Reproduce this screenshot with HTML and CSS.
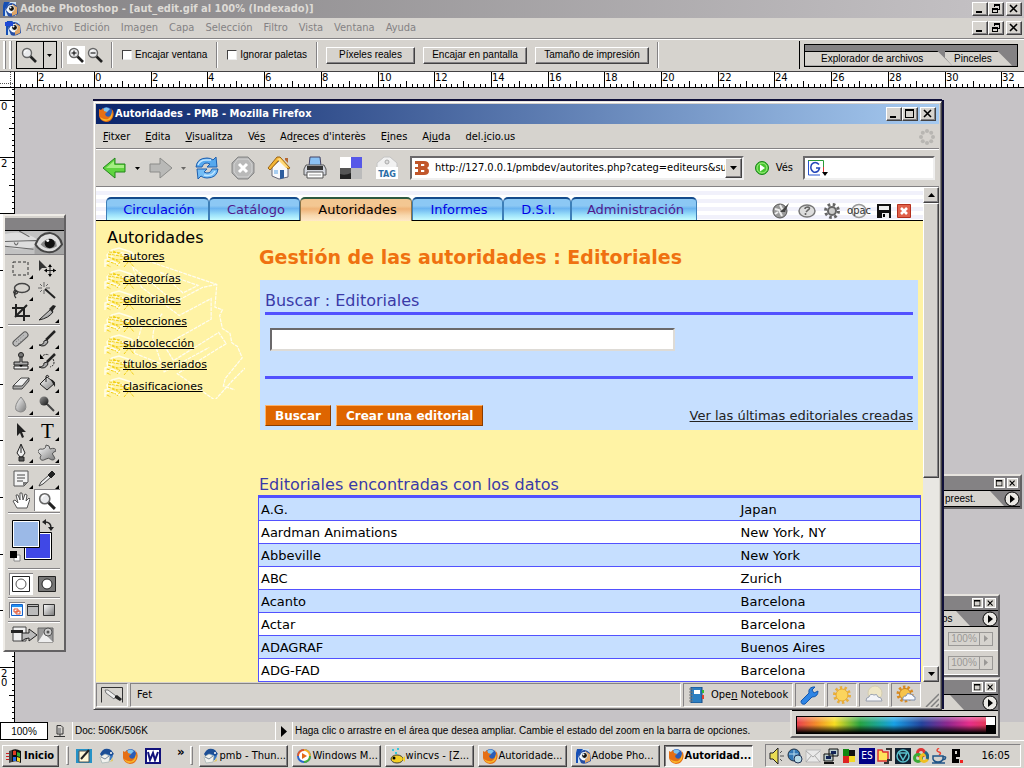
FILE: index.html
```html
<!DOCTYPE html>
<html lang="es">
<head>
<meta charset="utf-8">
<title>Adobe Photoshop - [aut_edit.gif al 100% (Indexado)]</title>
<link rel="stylesheet" href="styles.css">
</head>
<body>
<svg class="defs" aria-hidden="true">
  <defs>
    <linearGradient id="silver" x1="0" y1="0" x2="1" y2="1"><stop offset="0" stop-color="#fff"/><stop offset="1" stop-color="#777"/></linearGradient>
    <linearGradient id="dark" x1="0" y1="0" x2="1" y2="1"><stop offset="0" stop-color="#999"/><stop offset="1" stop-color="#111"/></linearGradient>
    <symbol id="firefox" viewBox="0 0 16 16"><circle cx="8.500" cy="7" r="6" fill="#2a5db8"/><path d="M5 3q3-3 7 0l-3 3-3 1z" fill="#7fc4ef"/><path d="M1 3l2 1 2-2 1 3 3 1-2 2 1 2q3 2 5-1 2-3 0-7 4 4 2 9-2 5-7 5-6-1-7-6z" fill="#e66f14"/><path d="M14 5q2 9-6 10-4 0-6-4 4 3 8 2 4-3 4-8z" fill="#f8b62b"/></symbol>
    <symbol id="photoshop" viewBox="0 0 16 16"><path d="M2 1h12v14H2z" fill="#cfe4f4"/><path d="M2 1h6L3 8v7H1V5z" fill="#164fb5"/><path d="M3 8q5-10 12-3l1 8q-6 4-10 2z" fill="#274ea3"/><path d="M4 9q4-7 10-2-2 7-7 5z" fill="#fff"/><path d="M10 3l5 3v7l-5 2z" fill="#dfa565"/><circle cx="9" cy="7.500" r="3.500" fill="#e8f3fb"/><circle cx="9.500" cy="7.500" r="2.400" fill="#111"/><circle cx="8.500" cy="6.500" r="1" fill="#fff"/></symbol>
    <symbol id="bird" viewBox="0 0 16 16"><circle cx="8" cy="7" r="6" fill="#3577c4"/><path d="M1 6q4-8 11-4l3 4-3 2Q6 3 3 9z" fill="#1c4e95"/><path d="M1 9l5-3 5 2-1 6-7 1z" fill="#f2f2ee" stroke="#9aa" stroke-width=".6"/><path d="M2 9l4 2 4-3" fill="none" stroke="#789"/><circle cx="12" cy="5" r="1" fill="#fff"/><path d="M13 9q0 4-3 5l4-1z" fill="#e3c85a"/></symbol>
    <symbol id="magnifier" viewBox="0 0 16 16"><path d="M9 9l6 6" stroke="#222" stroke-width="2.600"/><circle cx="6" cy="6" r="4.500" fill="#e9eaec" stroke="#666" stroke-width="1.400"/><path d="M3.500 6q0-3 3-3" fill="none" stroke="#fff"/></symbol>
    <symbol id="minimize" viewBox="0 0 10 10"><path d="M1 7h6v2H1z"/></symbol>
    <symbol id="restore" viewBox="0 0 10 10"><path d="M3 0h6v6H7V5h1V2H4v1H3zM1 4h6v5H1zm1 2v2h4V6z" fill-rule="evenodd"/></symbol>
    <symbol id="maximize" viewBox="0 0 10 10"><path d="M0 0h9v9H0zm1 2v6h7V2z" fill-rule="evenodd"/></symbol>
    <symbol id="cross" viewBox="0 0 10 10"><path d="M1 1l7 7M8 1L1 8" stroke="#000" stroke-width="1.600"/></symbol>
    <symbol id="play" viewBox="0 0 16 16"><circle cx="8" cy="8" r="7" fill="#ebe9e5" stroke="#000"/><path d="M6 4v8l5-4z"/></symbol>
    <symbol id="book" viewBox="0 0 32 21"><g fill="none"><path d="M1 20V13l3-1-1-4 5-5 7-2 12 4 3 3M4 12l9-6 12 4M1 17l7-3 8 4" stroke="#fffde8" stroke-width="1.500"/><path d="M4 7l12 2 11 2M4 10l10 3 13-2M3 14l9 3M5 5l12 1M3 18l4 2M9 4l9 4M21 14q5-3 6-1M20 20l5-6 5 6M8 12l8 3-3 4" stroke="#f2cf16" stroke-dasharray="3 1"/></g></symbol>
  </defs>
</svg>

<header class="ps-title">
  <svg class="i16"><use href="#photoshop"/></svg>
  <h1>Adobe Photoshop - [aut_edit.gif al 100% (Indexado)]</h1>
  <div class="win-buttons"><button aria-label="Minimizar"><svg><use href="#minimize"/></svg></button><button aria-label="Restaurar"><svg><use href="#restore"/></svg></button><button class="close" aria-label="Cerrar"><svg><use href="#cross"/></svg></button></div>
</header>

<nav class="ps-menu">
  <svg class="i16"><use href="#photoshop"/><path d="M0 2h8v4H0z" fill="#1e49d8"/></svg>
  <button>Archivo</button><button>Edición</button><button>Imagen</button><button>Capa</button><button>Selección</button><button>Filtro</button><button>Vista</button><button>Ventana</button><button>Ayuda</button>
  <div class="win-buttons"><button aria-label="Minimizar documento"><svg><use href="#minimize"/></svg></button><button aria-label="Restaurar documento"><svg><use href="#restore"/></svg></button><button class="close" aria-label="Cerrar documento"><svg><use href="#cross"/></svg></button></div>
</nav>

<div class="ps-options">
  <span class="grip"></span>
  <button class="tool-pick" aria-label="Herramienta zoom"><svg class="i16"><use href="#magnifier"/></svg><svg class="arrow" viewBox="0 0 5 3"><path d="M0 0h5L2.500 3z"/></svg></button>
  <span class="rule"></span>
  <div class="zooms"><button class="on" aria-label="Aumentar"><svg class="i16"><use href="#magnifier"/><path d="M3.500 6h5M6 3.500v5" stroke="#000"/></svg></button><button aria-label="Reducir"><svg class="i16"><use href="#magnifier"/><path d="M3.500 6h5" stroke="#000"/></svg></button></div>
  <span class="rule"></span>
  <label class="opt"><input type="checkbox">Encajar ventana</label>
  <span class="rule"></span>
  <label class="opt"><input type="checkbox">Ignorar paletas</label>
  <span class="rule"></span>
  <button class="push p1">Píxeles reales</button><button class="push p2">Encajar en pantalla</button><button class="push p3">Tamaño de impresión</button>
  <span class="rule"></span>
  <span class="well-edge"></span>
  <div class="well"><button class="w1">Explorador de archivos</button><button class="w2">Pinceles</button></div>
</div>

<div class="ruler-row"><div class="ruler-corner"></div><svg class="ruler-h" id="ruler-h" aria-hidden="true"></svg></div>

<main class="workspace">
  <svg class="ruler-v" id="ruler-v" aria-hidden="true"></svg>
  <div class="canvas">

  <section class="palette pal-preset">
    <div class="pal-title"><button aria-label="Contraer"><svg><use href="#maximize"/></svg></button><button aria-label="Cerrar"><svg><use href="#cross"/></svg></button></div>
    <div class="pal-tabs"><span class="pal-tab">preest.</span><button class="pal-go" aria-label="Menú de paleta"><svg><use href="#play"/></svg></button></div>
  </section>
  <section class="palette pal-layers">
    <div class="pal-title"><button aria-label="Contraer"><svg><use href="#maximize"/></svg></button><button aria-label="Cerrar"><svg><use href="#cross"/></svg></button></div>
    <div class="pal-tabs"><span class="pal-tab">os</span><button class="pal-go" aria-label="Menú de paleta"><svg><use href="#play"/></svg></button></div>
    <div class="pal-field"><button disabled><span>100%</span><i><svg viewBox="0 0 4 7"><path d="M0 0v7l4-3.500z"/></svg></i></button></div>
    <div class="pal-field"><button disabled><span>100%</span><i><svg viewBox="0 0 4 7"><path d="M0 0v7l4-3.500z"/></svg></i></button></div>
  </section>
  <section class="palette pal-color">
    <div class="pal-title"><button aria-label="Contraer"><svg><use href="#maximize"/></svg></button><button aria-label="Cerrar"><svg><use href="#cross"/></svg></button></div>
    <div class="pal-tabs"><span class="pal-tab"></span><button class="pal-go" aria-label="Menú de paleta"><svg><use href="#play"/></svg></button></div>
    <div class="ramp"><span></span></div>
  </section>

  <section class="firefox">
    <header class="ff-title"><svg class="i16"><use href="#firefox"/></svg><h2>Autoridades - PMB - Mozilla Firefox</h2>
      <div class="win-buttons"><button aria-label="Minimizar"><svg><use href="#minimize"/></svg></button><button aria-label="Maximizar"><svg><use href="#maximize"/></svg></button><button class="close" aria-label="Cerrar"><svg><use href="#cross"/></svg></button></div>
    </header>
    <nav class="ff-menu"><button><u>F</u>itxer</button><button><u>E</u>dita</button><button><u>V</u>isualitza</button><button>Vé<u>s</u></button><button>Ad<u>r</u>eces d'interès</button><button>E<u>i</u>nes</button><button>Aj<u>u</u>da</button><button>del.<u>i</u>cio.us</button>
      <svg class="throbber" viewBox="0 0 16 16"><g fill="#b8b6b2"><circle cx="8" cy="2" r="2"/><circle cx="12.200" cy="3.800" r="2"/><circle cx="14" cy="8" r="2"/><circle cx="12.200" cy="12.200" r="2"/><circle cx="8" cy="14" r="2"/><circle cx="3.800" cy="12.200" r="2"/><circle cx="2" cy="8" r="2"/><circle cx="3.800" cy="3.800" r="2"/></g></svg>
    </nav>
    <div class="ff-tools">
      <button aria-label="Enrere"><svg width="24" height="24" viewBox="0 0 24 24"><path d="M1 12L13 2v6h10v8H13v6z" fill="#5fd43f" stroke="#23871b"/><path d="M4 12l8-7v4h10v3z" fill="#a5ee83"/></svg></button>
      <svg class="arrow" viewBox="0 0 5 3"><path d="M0 0h5L2.500 3z"/></svg>
      <button aria-label="Endavant"><svg width="24" height="24" viewBox="0 0 24 24"><path d="M23 12L11 2v6H1v8h10v6z" fill="#b9b9b7" stroke="#8b8b89"/></svg></button>
      <svg class="arrow dim" viewBox="0 0 5 3"><path d="M0 0h5L2.500 3z"/></svg>
      <button aria-label="Actualitza"><svg width="24" height="24" viewBox="0 0 24 24"><path d="M1 11Q2 2 12 2q4 0 6 2l3-3 1 10H12l3-3Q9 5 7 11z" fill="#55a8ee" stroke="#1f5fae"/><path d="M23 13q-1 9-11 9-4 0-6-2l-3 3-1-10h10l-3 3q6 3 8-3z" fill="#74bdf6" stroke="#1f5fae"/><path d="M3 9q2-5 8-5h5M9 19q8 2 11-4" fill="none" stroke="#c4e6ff" stroke-width="1.500"/></svg></button>
      <button class="b-gap" aria-label="Atura"><svg width="24" height="24" viewBox="0 0 24 24"><path d="M7 1h10l6 6v10l-6 6H7l-6-6V7z" fill="#aaa" stroke="#888"/><path d="M7 3h10l4 5v8l-4 5H7l-4-5V8z" fill="#b9b9b9" stroke="#d5d5d5"/><path d="M8 8l8 8m0-8l-8 8" stroke="#fff" stroke-width="3"/></svg></button>
      <button class="b-gap" aria-label="Inici"><svg width="24" height="24" viewBox="0 0 24 24"><path d="M5 11l8-7 8 7v10l-9 2-7-3z" fill="#f8f8fb" stroke="#667"/><path d="M1 12L10 1h3l10 11-2 1-9-9-9 10z" fill="#f4b535" stroke="#9b6415"/><path d="M10 3l3-1 8 9-2 1z" fill="#ffd97a"/><path d="M13 14h4v8l-4 1z" fill="#2e5d9e"/><path d="M7 14h4v4H7z" fill="#a8cdf0"/><path d="M18 2h3v5l-3-3z" fill="#b56835"/></svg></button>
      <button class="b-gap" aria-label="Imprimeix"><svg width="24" height="24" viewBox="0 0 24 24"><path d="M7 1h10l1 9H6z" fill="#8cc3f5" stroke="#446"/><path d="M3 9h18l2 4v6H1v-6z" fill="#d3d6dd" stroke="#555"/><path d="M4 10h16v4H4z" fill="#333"/><path d="M4 16h16v6H4z" fill="#fff" stroke="#555"/><path d="M6 19h12" stroke="#999"/></svg></button>
      <button class="b-gap" aria-label="del.icio.us"><svg width="24" height="24" viewBox="0 0 24 24"><path d="M1 1h11v11H1z" fill="#fff"/><path d="M12 1h11v11H12z" fill="#5658e8"/><path d="M1 12h11v11H1z" fill="#222"/><path d="M12 12h11v11H12z" fill="#bbb"/><path d="M1 12h11v5q-6 3-11 1z" fill="#555"/></svg></button>
      <button class="b-gap" aria-label="TAG"><svg width="24" height="24" viewBox="0 0 24 24"><path d="M2 12V7l7-6h6l7 6v5z" fill="#f1f1f1" stroke="#c4c4c4"/><circle cx="12" cy="6" r="2" fill="#ddd" stroke="#aaa"/><path d="M1 11h22v12H1z" fill="#fff"/><text x="12" y="21" text-anchor="middle" class="tag-text">TAG</text></svg></button>
      <div class="url"><svg class="i16" viewBox="0 0 16 16"><path d="M1 1h9q5 0 5 4 0 2-2 3 2 1 2 3 0 4-5 4H1v-3h3V9H1V7h3V4H1zm6 3v2h3q1-1 0-2zm0 6v2h3q1-1 0-2z" fill="#c1572b" fill-rule="evenodd"/></svg><input type="text" aria-label="Adreça" value="http://127.0.0.1/pmbdev/autorites.php?categ=editeurs&amp;sub=&amp;id="><button class="drop" aria-label="Historial"><svg class="arrow big" viewBox="0 0 7 4"><path d="M0 0h7L3.500 4z"/></svg></button></div>
      <button class="go"><svg class="i16" viewBox="0 0 16 16"><circle cx="8" cy="8" r="6.500" fill="#46c52f" stroke="#168319"/><circle cx="8" cy="8" r="5" fill="none" stroke="#a5ef86"/><path d="M6 4.500v7L11 8z" fill="#fff"/></svg>Vés</button>
      <div class="search"><svg width="22" height="18" viewBox="0 0 22 18"><path d="M1 1h15v15H1z" fill="#fff"/><path d="M1 1.500h15.500V8" fill="none" stroke="#2a9a37"/><path d="M1.500 2v14H13" fill="none" stroke="#2854cf"/><path d="M16.500 8v5" stroke="#d33"/><path d="M12 5.500q-4-4-7.500 0-2 5 2 7.500 5 1 6-4H9" fill="none" stroke="#2346b8" stroke-width="1.500"/><path d="M15 13h6l-3 4z"/></svg><input type="text" aria-label="Cerca"></div>
    </div>

    <div class="ff-view">
      <div class="page">
        <div class="tabs">
          <a href="#" class="t1">Circulación</a><a href="#" class="t2 seen">Catálogo</a><a href="#" class="t3 active">Autoridades</a><a href="#" class="t4">Informes</a><a href="#" class="t5">D.S.I.</a><a href="#" class="t6 seen">Administración</a>
          <div class="tab-icons">
            <svg width="20" height="18" viewBox="0 0 20 18"><circle cx="9" cy="9" r="7" fill="#999" stroke="#555"/><path d="M4 7l4 1 3 6M9 3l2 4 4 1M4 12l3-2" stroke="#eee" stroke-width="2" fill="none"/><path d="M9 10l9-9-4 9" fill="#444"/></svg>
            <svg width="20" height="18" viewBox="0 0 20 18"><ellipse cx="10" cy="9" rx="8" ry="6" fill="#ddd" stroke="#777" stroke-width="1.500"/><path d="M8 7q0-2 3-2 3 1 0 3l-2 2M8.500 11v2" fill="none" stroke="#666" stroke-width="1.600"/></svg>
            <svg width="18" height="18" viewBox="0 0 18 18"><circle cx="9" cy="9" r="6.500" fill="none" stroke="#666" stroke-width="3" stroke-dasharray="2.600 2.500"/><circle cx="9" cy="9" r="4" fill="#ccc" stroke="#666" stroke-width="2"/></svg>
            <svg class="opac" width="26" height="18" viewBox="0 0 26 18"><ellipse cx="12" cy="9" rx="7" ry="6.500" fill="#f5f5f5" stroke="#999" stroke-width="1.500"/><text x="12" y="12" text-anchor="middle">opac</text></svg>
            <svg class="disk" width="14" height="14" viewBox="0 0 14 14"><path d="M0 0h14v14H0z" fill="#111"/><path d="M2 2h10v4H2zM5 9h7v5H5z" fill="#eee"/><path d="M6 10h2v3H6z"/></svg>
            <svg class="exit" width="14" height="14" viewBox="0 0 14 14"><path d="M.5.500h13v13H.5z" fill="#e0604a" stroke="#b5301e"/><path d="M4 4l6 6m0-6l-6 6" stroke="#fff" stroke-width="2.600"/></svg>
          </div>
        </div>
        <div class="page-body">
          <aside class="side">
            <h3>Autoridades</h3>
            <div class="side-links">
              <svg class="watermark" viewBox="0 0 150 152"><g fill="none" stroke="#fffdf0" stroke-width="1.300" stroke-dasharray="4 1"><path d="M18 1l8 2 94 32-2 24 8 3-3 6 3 14 8 5 2 10 6 4 5 12-18 22-2 8 12 4M120 35l-15 3-30 16L30 16l10 22 40 30 34-18v22l-50 28 10 16 48-30 8 12-52 32 40 28 18-20 14-14M60 22l40 14-16 8zM62 66q-10 12-10 26l12 36 48-26M10 80h30l-8 28 30 12"/></g></svg>
              <ul>
                <li><svg><use href="#book"/></svg><a href="#">autores</a></li>
                <li><svg><use href="#book"/></svg><a href="#">categorías</a></li>
                <li><svg><use href="#book"/></svg><a href="#">editoriales</a></li>
                <li><svg><use href="#book"/></svg><a href="#">colecciones</a></li>
                <li><svg><use href="#book"/></svg><a href="#">subcolección</a></li>
                <li><svg><use href="#book"/></svg><a href="#">títulos seriados</a></li>
                <li><svg><use href="#book"/></svg><a href="#">clasificaciones</a></li>
              </ul>
            </div>
          </aside>
          <div class="content">
            <h2>Gestión de las autoridades : Editoriales</h2>
            <form class="search-form">
              <h3><label for="q">Buscar : Editoriales</label></h3>
              <div class="field"><input id="q" type="text"></div>
              <div class="actions"><button type="button">Buscar</button><button type="button">Crear una editorial</button><a href="#">Ver las últimas editoriales creadas</a></div>
            </form>
            <h3 class="found">Editoriales encontradas con los datos</h3>
            <table>
              <tbody>
                <tr><td>A.G.</td><td>Japan</td></tr>
                <tr><td>Aardman Animations</td><td>New York, NY</td></tr>
                <tr><td>Abbeville</td><td>New York</td></tr>
                <tr><td>ABC</td><td>Zurich</td></tr>
                <tr><td>Acanto</td><td>Barcelona</td></tr>
                <tr><td>Actar</td><td>Barcelona</td></tr>
                <tr><td>ADAGRAF</td><td>Buenos Aires</td></tr>
                <tr><td>ADG-FAD</td><td>Barcelona</td></tr>
              </tbody>
            </table>
          </div>
        </div>
      </div>
      <div class="scrollbar"><button aria-label="Amunt"><svg class="arrow big" viewBox="0 0 7 4"><path d="M0 4h7L3.500 0z"/></svg></button><div class="thumb"></div><div class="track"></div><button aria-label="Avall"><svg class="arrow big" viewBox="0 0 7 4"><path d="M0 0h7L3.500 4z"/></svg></button></div>
    </div>

    <footer class="ff-status">
      <div class="cell c-edit"><svg width="22" height="16" viewBox="0 0 22 16"><path d="M.5 15.500V.5h21v15" fill="none" stroke="#333"/><path d="M4 3h3l8 6-2 3-8-6z" fill="#eee" stroke="#777"/><path d="M14 9l2-1 5 4-2 2-5-3z" fill="#222"/></svg></div>
      <div class="cell c-text">Fet</div>
      <div class="cell c-note"><svg class="i16" viewBox="0 0 16 16"><path d="M3 0h11v16H3z" fill="#2c7fc2" stroke="#174a83"/><path d="M6 3h6v4H6z" fill="#fff"/><path d="M1 2h4M1 5h4M1 8h4M1 11h4M1 14h4" stroke="#777"/><path d="M14 3h2v3h-2z" fill="#3b3"/><path d="M14 8h2v4h-2z" fill="#d43"/></svg><span>Ope<u>n</u> Notebook</span></div>
      <div class="cell c-ico"><svg width="20" height="20" viewBox="0 0 20 20"><path d="M1 16l8-8q-1-5 4-6h2l-3 3 2 3 4-2q0 6-6 6l-7 7q-4 1-4-3z" fill="#2e85e5" stroke="#1557ab"/></svg></div>
      <div class="cell c-ico"><svg width="20" height="20" viewBox="0 0 20 20"><circle cx="10" cy="10" r="7.500" fill="none" stroke="#e8ae3c" stroke-width="3" stroke-dasharray="2.400 2.300"/><circle cx="10" cy="10" r="6" fill="#fbd45d" stroke="#e6a72f"/></svg></div>
      <div class="cell c-ico"><svg width="20" height="20" viewBox="0 0 20 20"><circle cx="11" cy="8" r="7" fill="#eee6c6" stroke="#d4cdb0"/><path d="M2 16q0-4 3-4 1-4 5-2 3-2 4 2 4 0 4 4z" fill="#f3f4f8" stroke="#98a0ae"/></svg></div>
      <div class="cell c-ico"><svg width="20" height="20" viewBox="0 0 20 20"><circle cx="9" cy="9" r="7" fill="none" stroke="#d98a21" stroke-width="3" stroke-dasharray="2.400 2"/><circle cx="9" cy="9" r="5.500" fill="#f6c34b" stroke="#c98015"/><path d="M7 15q-1-4 3-4 1-4 4-2 3 0 3 2 3 0 2 4z" fill="#f8faff" stroke="#7b8caa"/></svg></div>
      <svg class="size-grip" viewBox="0 0 14 14"><path d="M1 14L14 1M6 14l8-8M11 14l3-3" stroke="#808080" stroke-width="1.500"/></svg>
    </footer>
  </section>

  <aside class="toolbox">
    <div class="tb-title"></div>
    <svg class="tb-eye" viewBox="0 0 58 24" preserveAspectRatio="none"><path d="M0 0h58v24H0z" fill="#c2c2c2"/><path d="M0 3q18-5 32 6l-4 8Q14 22 0 15z" fill="#dedede"/><path d="M0 11l30-1 4 2M9 12q2 5 4 0M0 16l28 3M14 0l10 6" stroke="#666" fill="none"/><path d="M29 24q-1-20 14-24h15v24z" fill="#a5a5a5"/><path d="M30 14Q34 2 44 2q10 2 12 12-6 9-14 8-8-1-12-8z" fill="#ddd" stroke="#444" stroke-width="2"/><path d="M35 14q6-9 15-3l1 5q-8 6-16-2z" fill="#888"/><circle cx="44" cy="13" r="5" fill="#111"/><circle cx="42" cy="10" r="1.500" fill="#fff"/></svg>
    <div class="tb-grid">
      <button class="more" aria-label="Marco"><svg><path d="M1 2h15v13H1z" fill="none" stroke="#333" stroke-dasharray="3 2"/></svg></button>
      <button aria-label="Mover"><svg><path d="M1 0v11l3-3h5z" fill="#333"/><path d="M12 5v11M7 10.500h11" stroke="#222"/><path d="M12 4l2 3h-4zM12 17l2-3h-4zM6 10.500l3-2v4zM18 10.500l-3-2v4z"/></svg></button>
      <button class="more" aria-label="Lazo"><svg><ellipse cx="10" cy="6" rx="7.500" ry="4.500" fill="none" stroke="#444" stroke-width="1.500"/><path d="M3 8q-3 3 1 4 3-1 0-3-3 4 0 7" fill="none" stroke="#333" stroke-width="1.300"/></svg></button>
      <button aria-label="Varita"><svg><path d="M7 7l10 9" stroke="#222" stroke-width="2"/><path d="M6 0v5M6 8v4M0 6h4M8 6h4M2 2l2 2M10 2L8 4M2 10l2-2" stroke="#666"/></svg></button>
      <button aria-label="Recortar"><svg><path d="M4 0v12h14M0 4h12v13M3 13L15 1" fill="none" stroke="#222" stroke-width="2"/></svg></button>
      <button class="more" aria-label="Sector"><svg><path d="M1 16L13 5l2 3q-4 6-14 8z" fill="url(#silver)" stroke="#222"/><path d="M11 5l4-4 3 1-4 6z" fill="#222"/></svg></button>
      <hr>
      <button class="more" aria-label="Pincel corrector"><svg><path d="M4 13L13 5" stroke="#555" stroke-width="7" stroke-linecap="round"/><path d="M4 13L13 5" stroke="#bbb" stroke-width="5" stroke-linecap="round"/><path d="M4 12l8-7M6 14l8-7" stroke="#777" stroke-dasharray="1 2"/></svg></button>
      <button class="more" aria-label="Pincel"><svg><path d="M8 10L17 1" stroke="#222" stroke-width="2.500"/><path d="M1 15q5 0 5-4l3-1 1 2q-3 6-9 3z" fill="url(#silver)" stroke="#222"/></svg></button>
      <button class="more" aria-label="Tampón"><svg><circle cx="9" cy="3" r="2.500" fill="#777" stroke="#222"/><path d="M8 5h2v5h6v3H2v-3h6z" fill="#aaa" stroke="#222"/><path d="M2 14h14v3H2z" fill="#eee" stroke="#222"/><path d="M7 13h4l-2 2z"/></svg></button>
      <button class="more" aria-label="Pincel de historia"><svg><path d="M9 10L17 2" stroke="#222" stroke-width="2.500"/><path d="M1 15q5 0 5-4l3-1 1 2q-3 6-9 3z" fill="#aaa" stroke="#222"/><path d="M3 6q3-5 8-3M15 7q3 6-3 8" fill="none" stroke="#222" stroke-dasharray="2 1"/><path d="M2 2v5h4z"/></svg></button>
      <button class="more" aria-label="Borrador"><svg><path d="M1 12l8-8h8l-7 9z" fill="#eee" stroke="#444"/><path d="M1 12v3h9l7-8V4l-7 8H1z" fill="#aaa" stroke="#444"/></svg></button>
      <button class="more" aria-label="Bote de pintura"><svg><path d="M2 10l7-7 8 6-8 7z" fill="url(#silver)" stroke="#222"/><path d="M8 8V2q2-2 3 1" fill="none" stroke="#222"/><path d="M12 5q6 1 5 8-2-3-3-5z" fill="#222"/></svg></button>
      <button class="more" aria-label="Desenfocar"><svg><path d="M9 1q7 8 4 13-4 4-9 0-2-5 5-13z" fill="url(#silver)" stroke="#888"/></svg></button>
      <button class="more" aria-label="Sobreexponer"><svg><path d="M9 8l7 7" stroke="#444" stroke-width="2"/><circle cx="6" cy="5" r="4.500" fill="url(#dark)"/></svg></button>
      <hr>
      <button class="more" aria-label="Selección de trazado"><svg><path d="M5 1v13l3-3 2 5 2-1-2-5h4z" fill="#222"/></svg></button>
      <button class="more type-tool" aria-label="Texto">T</button>
      <button class="more" aria-label="Pluma"><svg><path d="M9 0l4 9-3 4H8l-3-4z" fill="#eee" stroke="#222"/><path d="M9 1v8M7 13h5v4H7z" stroke="#222" fill="#555"/></svg></button>
      <button class="more" aria-label="Forma"><svg><path d="M8 1q4 0 4 4 6-2 6 2-5 2-3 4 4 5-1 5-4-3-6-1-5 3-6-1 2-3 0-4-4-3 0-5 6 1 6-4z" fill="url(#silver)" stroke="#555"/></svg></button>
      <hr>
      <button class="more" aria-label="Notas"><svg><path d="M2 1h14v11l-4 4H2z" fill="#f3f3f3" stroke="#555"/><path d="M5 5h8M5 8h8M5 11h6" stroke="#444"/><path d="M11 16v-4h5z" fill="#777"/></svg></button>
      <button class="more" aria-label="Cuentagotas"><svg><path d="M1 16l2-4 8-7 2 2-8 7z" fill="#eee" stroke="#444"/><path d="M10 5l4-4 3 3-4 4z" fill="#222" stroke="#222"/></svg></button>
      <button aria-label="Mano"><svg><path d="M5 16L1 9l2-1 3 3-2-8h2l2 5V1h2l1 7 2-6 2 1-1 6 3-3 1 1-3 9z" fill="#fff" stroke="#555"/></svg></button>
      <button class="picked" aria-label="Zoom"><svg><use href="#magnifier"/></svg></button>
      <hr>
    </div>
    <svg class="tb-colors" viewBox="0 0 58 52" width="58" height="52"><path d="M19.500 17.500h27v27h-27z" fill="#fff" stroke="#000"/><path d="M21 19h24v24H21z" fill="#4048e6"/><path d="M7.500 5.500h27v27h-27z" fill="#fff" stroke="#000"/><path d="M9 7h24v24H9z" fill="#9bb9e7"/><path d="M9 40h6v6H9z" fill="#fff" stroke="#888"/><path d="M5 36h7v7H5z"/><path d="M40 7q6 0 6 6" fill="none" stroke="#222" stroke-width="1.500"/><path d="M37 7l4-3v6zM43 12h6l-3 4z" fill="#222"/></svg>
    <hr>
    <div class="tb-row two"><button class="picked" aria-label="Modo estándar"><svg viewBox="0 0 18 16"><path d="M.5.500h17v15H.5z" fill="#fff" stroke="#222"/><circle cx="9" cy="8" r="5" fill="#fff" stroke="#555"/></svg></button><button aria-label="Máscara rápida"><svg viewBox="0 0 18 16"><path d="M.5.500h17v15H.5z" fill="#777" stroke="#222"/><circle cx="9" cy="8" r="5" fill="#fff" stroke="#222"/></svg></button></div>
    <hr>
    <div class="tb-row three"><button class="picked" aria-label="Ventana"><svg viewBox="0 0 12 12"><path d="M.5.500h11v11H.5z" fill="#eef6ff" stroke="#1460c8"/><path d="M1 1h10v2H1z" fill="#2490ee"/><path d="M3 5h4v3H3zM5 7h4v3H5z" fill="none" stroke="#e5532b"/></svg></button><button aria-label="Pantalla con menús"><svg viewBox="0 0 12 12"><path d="M.5.500h11v11H.5z" fill="#bbb" stroke="#333"/><path d="M1 2.500h10" stroke="#333"/></svg></button><button aria-label="Pantalla completa"><svg viewBox="0 0 12 12"><path d="M.5.500h11v11H.5z" fill="url(#silver)" stroke="#333"/></svg></button></div>
    <hr>
    <svg class="tb-jump" viewBox="0 0 50 22" width="50" height="22"><path d="M4 3h13v14H4z" fill="#eee" stroke="#444"/><path d="M2 6h12v3H2z" fill="#222"/><path d="M13 17V9h7V5l8 6-8 6v-3q-4 0-7 3z" fill="#bbb" stroke="#222"/><path d="M29 4h15v14H29z" fill="#999" stroke="#666"/><path d="M29 18l6-9 9 9z" fill="#eee"/><circle cx="39" cy="8" r="4" fill="#ccc" stroke="#555"/><circle cx="39" cy="8" r="1.500" fill="#555"/></svg>
  </aside>
  </div>
</main>

<footer class="ps-status">
  <input type="text" aria-label="Zoom" value="100%">
  <span class="doc-icon"><svg width="14" height="12" viewBox="0 0 14 12"><path d="M4 .500h4l2 2V9H4zM1 11.500h11M7 9v2" fill="none" stroke="#333"/><path d="M5 3h3v5H5z" fill="#999"/></svg></span>
  <span class="doc">Doc: 506K/506K</span>
  <button aria-label="Información"><svg width="6" height="11" viewBox="0 0 6 11"><path d="M0 0v11l6-5.500z"/></svg></button>
  <span class="hint">Haga clic o arrastre en el área que desea ampliar. Cambie el estado del zoom en la barra de opciones.</span>
</footer>

<footer class="taskbar">
  <button class="start"><svg width="17" height="15" viewBox="0 0 17 15"><path d="M0 4h3v1H0zM0 7h3v1H0zM0 10h3v1H0z" fill="#c22"/><path d="M3 2l3-1v12l-3 1z" fill="#444"/><path d="M6 1q4-2 9 1v12q-5-3-9-1z" fill="#111"/><path d="M7 2q2-1 3 0v4H7z" fill="#e23b24"/><path d="M11 3l3 1v4l-3-1z" fill="#31ae35"/><path d="M7 8h3v4H7z" fill="#246be4"/><path d="M11 8l3 1v4l-3-1z" fill="#f4d328"/></svg>Inicio</button>
  <span class="grip2"></span>
  <div class="quick">
    <a href="#" aria-label="Escritorio"><svg class="i16" viewBox="0 0 16 16"><path d="M0 1h16v14H0z" fill="#2592c7"/><path d="M3 3h10v11H3z" fill="#fff8d8" stroke="#555"/><path d="M5 11l8-9" stroke="#222" stroke-width="2"/></svg></a>
    <a href="#" aria-label="Thunderbird"><svg class="i16"><use href="#bird"/></svg></a>
    <a href="#" aria-label="Firefox"><svg class="i16"><use href="#firefox"/></svg></a>
    <a href="#" aria-label="Word"><svg class="i16" viewBox="0 0 16 16"><path d="M0 0h16v16H0z" fill="#12127b"/><path d="M2 2h12v12H2z" fill="#fff"/><path d="M3 4l2 8 3-7 2 7 3-8" fill="none" stroke="#12127b" stroke-width="2"/></svg></a>
  </div>
  <span class="chev">»</span><span class="grip2"></span>
  <div class="tasks">
    <button><svg class="i16"><use href="#bird"/></svg><span>pmb - Thun...</span></button>
    <button><svg class="i16" viewBox="0 0 16 16"><circle cx="8" cy="8" r="7" fill="#2b66cc"/><path d="M8 1a7 7 0 017 7H8z" fill="#f3b125"/><path d="M1 8a7 7 0 017-7v7z" fill="#e15a28"/><path d="M8 15a7 7 0 007-7H8z" fill="#46ad3c"/><circle cx="8" cy="8" r="5" fill="#fff"/><path d="M6 5v6l5-3z" fill="#e36a18"/></svg><span>Windows M...</span></button>
    <button><svg class="i16" viewBox="0 0 16 16"><ellipse cx="8" cy="11" rx="6" ry="4" fill="#f4cf23" stroke="#443"/><path d="M13 11l3-3v6z" fill="#f4cf23"/><circle cx="5" cy="10" r="1.500"/><path d="M3 1h2v2H3zM8 0h2v2H8zM6 4h2v2H6z" fill="#35c8dc"/></svg><span>wincvs - [Z...</span></button>
    <button><svg class="i16"><use href="#firefox"/></svg><span>Autoridade...</span></button>
    <button><svg class="i16"><use href="#photoshop"/></svg><span>Adobe Pho...</span></button>
    <button class="pressed"><svg class="i16"><use href="#firefox"/></svg><span>Autoridad...</span></button>
  </div>
  <div class="tray">
    <svg class="i16" viewBox="0 0 16 16"><path d="M1 5h3l5-5v16l-5-5H1z" fill="#e9dc54" stroke="#222"/><path d="M11 5l2-2M11 8h4M11 11l2 2" stroke="#555"/></svg>
    <svg class="i16" viewBox="0 0 16 16"><circle cx="7" cy="7" r="6" fill="#3478b5" stroke="#234"/><path d="M2 6h9M7 2v10" stroke="#bde"/><circle cx="11" cy="11" r="4" fill="#b9dbe7" stroke="#235"/></svg>
    <svg class="i16" viewBox="0 0 16 16"><path d="M1 2h15v12H1z" fill="#e9e9e9" stroke="#bbb"/><path d="M1 3l7 6 7-6M1 14l5-6M15 14l-5-6" fill="none" stroke="#aaa"/></svg>
    <svg class="i16" viewBox="0 0 16 16"><path d="M6 1h9v7H6zM1 6h9v7H1z" fill="#bcc" stroke="#111"/><path d="M3 8h5v3H3zM8 3h5v3H8z" fill="#125"/><path d="M1 15h10" stroke="#111" stroke-width="2"/></svg>
    <svg class="i16" viewBox="0 0 16 16"><path d="M2 1h6v7H2z" fill="#181"/><path d="M8 2h6v6H8z" fill="#111"/><path d="M2 8h6v7H2z" fill="#d22"/><path d="M8 8h6v6H8z" fill="#f3da24"/></svg>
    <span class="lang">ES</span>
    <svg class="i16" viewBox="0 0 16 16"><path d="M1 2h4l1 2h5v9H1z" fill="#ffe35b" stroke="#d33" stroke-width="1.500"/><path d="M9 1h5v11h-3v3H7" fill="none" stroke="#333" stroke-width="2"/></svg>
    <svg class="i16" viewBox="0 0 16 16"><path d="M0 0h16v16H0z" fill="#123"/><circle cx="8" cy="8" r="6" fill="none" stroke="#5bc1cc" stroke-width="1.500"/><path d="M4 5h8l-4 7z" fill="none" stroke="#5bc1cc" stroke-width="1.500"/></svg>
    <svg class="i16" viewBox="0 0 16 16"><g fill="none" stroke-width="3"><circle cx="8" cy="5" r="3.500" stroke="#d33"/><circle cx="5" cy="10" r="3.500" stroke="#39a936"/><circle cx="11" cy="10" r="3.500" stroke="#f0bf21"/><path d="M12 4q4 3 2 7" stroke="#268"/></g></svg>
    <svg class="i16" viewBox="0 0 16 16"><path d="M8 0q-4 3 0 4 3 1 0 3" stroke="#e43" stroke-width="1.500" fill="none"/><path d="M2 8h10v3q-1 3-5 3t-5-3zM12 9q4-1 2 2l-3 1M1 15h13" fill="none" stroke="#258" stroke-width="1.500"/></svg>
    <svg class="i16" viewBox="0 0 16 16"><path d="M3 1h8v8H7v2h3v4H3zm3 2v3h2V3z" fill-rule="evenodd"/><path d="M11 12h3v3h-3z" fill="#e22"/></svg>
    <time>16:05</time>
  </div>
</footer>
<script src="rulers.js"></script>
</body>
</html>
```
FILE: styles.css
```css
* { box-sizing: border-box; }
html, body { height: 100%; }
body {
  margin: 0; display: flex; flex-direction: column; overflow: hidden;
  background: #d6d3ce; color: #000;
  font: 11px/14px "DejaVu Sans Condensed", "DejaVu Sans", sans-serif;
}
h1, h2, h3, ul, form { margin: 0; padding: 0; }
button { font: inherit; color: inherit; background: none; border: 0; padding: 0; margin: 0; white-space: nowrap; }
input { font: inherit; margin: 0; }
svg { flex: none; display: block; }
.defs { position: absolute; width: 0; height: 0; }
.i16 { width: 16px; height: 16px; }
.arrow { width: 5px; height: 3px; }
.arrow.big { width: 7px; height: 4px; }
.arrow.dim { opacity: .5; }

/* Shared window buttons */
.win-buttons { display: flex; margin-left: auto; }
.win-buttons button, .scrollbar button, .drop {
  width: 16px; height: 14px; display: flex; align-items: center; justify-content: center;
  background: #d6d3ce; border: 1px solid; border-color: #fff #424142 #424142 #fff;
  box-shadow: inset -1px -1px #848284;
}
.win-buttons svg { width: 10px; height: 10px; }
.win-buttons .close { margin-left: 2px; }

/* Photoshop frame */
.ps-title { height: 18px; flex: none; display: flex; align-items: center; padding: 0 2px; gap: 2px; background: linear-gradient(90deg, #848284, #c6c3c6); color: #dedbd6; }
.ps-title h1 { font-size: 11px; font-weight: bold; white-space: nowrap; }
.ps-menu { height: 20px; flex: none; display: flex; align-items: center; padding: 0 2px; color: #848284; }
.ps-menu .i16 { margin: 0 5px 0 3px; }
.ps-menu > button { margin-right: 11px; }
.ps-options {
  height: 34px; flex: none; display: flex; align-items: center; padding: 0 6px 0 3px;
  border-top: 1px solid #848284; border-bottom: 1px solid #424142; box-shadow: inset 0 1px #fff;
  font: 10px/12px "Liberation Sans", Arial, sans-serif;
}
.grip { flex: none; width: 9px; height: 28px; margin-right: 4px; background: linear-gradient(90deg, #fff 0 2px, #848284 2px 3px, transparent 3px 6px, #fff 6px 8px, #848284 8px 9px); }
.rule { width: 2px; height: 26px; background: #848284; border-right: 1px solid #fff; flex: none; }
.tool-pick { display: flex; align-items: center; width: 41px; height: 28px; border: 1px solid #000; padding-left: 4px; background: linear-gradient(#000, #000) 26px 0 / 1px 100% no-repeat; }
.tool-pick .arrow { margin-left: 10px; }
.tool-pick + .rule { margin: 0 4px 0 4px; }
.zooms { display: flex; gap: 1px; margin-right: 7px; }
.zooms button { width: 18px; height: 18px; padding: 1px; }
.zooms .on { background: #fff; border: 1px solid #fff; padding: 0; }
.opt { display: flex; align-items: center; gap: 3px; margin: 0 9px 0 9px; white-space: nowrap; }
.opt input { appearance: none; width: 10px; height: 10px; background: #fff; border: 1px solid; border-color: #424142 #eee #eee #424142; }
.push { height: 17px; border: 1px solid; border-color: #fff #424142 #424142 #fff; box-shadow: inset -1px -1px #848284; margin-left: 8px; }
.p1 { width: 89px; } .p2 { width: 104px; } .p3 { width: 114px; }
.push + .rule { margin-left: 8px; }
.well-edge { width: 1px; height: 28px; background: #000; margin: 0 4px 0 auto; }
.well { display: flex; align-items: flex-end; width: 214px; height: 23px; background: #848284; border: 1px solid #000; }
.well button { height: 15px; background: #d6d3ce; border-top: 1px solid #000; text-align: left; }
.well .w1 { width: 147px; padding-left: 16px; clip-path: polygon(0 0, 132px 0, 100% 100%, 0 100%); }
.well .w2 { width: 67px; margin-left: -7px; padding-left: 9px; clip-path: polygon(0 0, 52px 0, 100% 100%, 7px 100%, 0 7px); }

.ruler-row { display: flex; flex: none; height: 16px; background: #fff; border-bottom: 1px solid #000; }
.ruler-corner { width: 15px; border-right: 1px solid #000; background: linear-gradient(90deg, #555 50%, transparent 50%) 0 11px / 2px 1px repeat-x, linear-gradient(#555 50%, transparent 50%) 10px 0 / 1px 2px repeat-y; }
.ruler-h { flex: 1; height: 15px; min-width: 0; }
.ruler-v { width: 15px; height: 100%; background: #fff; border-right: 1px solid #000; overflow: hidden; }
.ruler-h text, .ruler-v text { font: 10px "DejaVu Sans", sans-serif; }

.workspace { flex: 1; min-height: 0; display: flex; background: #c6c3c6; position: relative; z-index: 1; }
.canvas { flex: 1; }

/* Palettes */
.palette { position: absolute; background: #d6d3ce; border: 2px solid; border-color: #e7e4df #636163 #636163 #e7e4df; font: 10px/12px "Liberation Sans", Arial, sans-serif; }
.pal-title { height: 14px; background: #848284; display: flex; justify-content: flex-end; align-items: center; gap: 2px; padding-right: 2px; }
.pal-title button { width: 11px; height: 10px; background: #d6d3ce; border: 1px solid #fff; display: grid; place-items: center; }
.pal-title svg { width: 7px; height: 7px; }
.pal-tabs { height: 17px; border: solid #000; border-width: 1px 0; background: #848284; display: flex; align-items: center; }
.pal-tab { align-self: stretch; flex: 1; background: #d6d3ce; clip-path: polygon(0 0, calc(100% - 14px) 0, 100% 100%, 0 100%); line-height: 16px; }
.pal-go, .pal-go svg { width: 16px; height: 16px; }
.pal-preset { width: 90px; right: 2px; top: 386px; }
.pal-preset .pal-tab { padding-left: 11px; }
.pal-layers { width: 120px; right: 24px; top: 506px; }
.pal-layers .pal-tab { padding-left: 60px; margin-right: 12px; }
.pal-field { height: 24px; display: flex; justify-content: flex-end; align-items: center; padding-right: 5px; border-bottom: 1px solid #fff; }
.pal-field button { display: flex; width: 45px; height: 14px; border: 1px solid #9a9896; color: #9a9896; }
.pal-field span { width: 31px; border-right: 1px solid #9a9896; }
.pal-field i { flex: 1; align-self: center; display: grid; place-items: center; }
.pal-field svg { width: 4px; height: 7px; fill: #9a9896; }
.pal-color { left: 790px; right: 24px; top: 590px; bottom: -16px; }
.pal-color .pal-tab { margin-right: 18px; }
.ramp { margin: 5px 2px 0 4px; height: 18px; border: 1px solid #000; display: flex; justify-content: flex-end;
  background: linear-gradient(rgba(255,255,255,.35), transparent 35% 50%, #000), linear-gradient(90deg, #e8404f, #f38f2a 10%, #f6dd22 19%, #27a343 32%, #1ba5a1 42%, #18a0e5 49%, #24439c 63%, #8e288e 76%, #e52e8a 87%, #e43b3c); }
.ramp span { width: 9px; background: linear-gradient(#fff 50%, #000 50%); }

/* Firefox window */
.firefox { position: absolute; left: 93px; right: 82px; top: 13px; bottom: 12px; display: flex; flex-direction: column; background: #d6d3ce; border: 1px solid; border-color: #e7e4df #424142 #424142 #e7e4df; padding: 2px; box-shadow: inset 1px 1px #fff, inset -1px -1px #848284, 0 -2px #10103a, 2px -1px #10103a; }
.ff-title { height: 20px; flex: none; display: flex; align-items: center; gap: 1px; padding: 0 3px 0 2px; background: linear-gradient(90deg, #0a246a, #a6caf0); color: #fff; }
.ff-title h2 { font-size: 11px; white-space: nowrap; }
.ff-menu { height: 25px; flex: none; display: flex; align-items: center; padding: 1px 4px 0 7px; border-bottom: 1px solid #848284; }
.ff-menu button { margin-right: 15px; }
.ff-menu .throbber { width: 16px; height: 16px; margin-left: auto; }
.ff-tools { height: 38px; flex: none; display: flex; align-items: center; padding: 0 4px 0 6px; border-bottom: 1px solid #848284; border-top: 1px solid #fff; }
.ff-tools > .arrow { margin: 0 9px 0 9px; }
.ff-tools > .arrow.dim { margin-left: 8px; }
.ff-tools .b-gap { margin-left: 12px; }
.tag-text { font: bold 9px "DejaVu Sans Condensed", sans-serif; fill: #2b6da6; }
.url { flex: 1; min-width: 0; height: 24px; margin-left: 11px; display: flex; align-items: center; background: #fff; border: 2px solid; border-color: #6b696b #efefef #efefef #6b696b; padding-left: 2px; }
.url input { flex: 1; min-width: 0; border: 0; padding: 0 0 0 5px; background: none; }
.url .drop { height: 20px; width: 17px; }
.go { display: flex; align-items: center; gap: 6px; margin: 0 10px; }
.search { width: 132px; height: 24px; display: flex; align-items: center; background: #fff; border: 2px solid; border-color: #6b696b #efefef #efefef #6b696b; padding-left: 2px; }
.search input { flex: 1; min-width: 0; border: 0; background: none; }

.ff-view { flex: 1; min-height: 0; display: flex; }
.page { flex: 1; min-width: 0; overflow: hidden; background: #fff3a5; font: 13px/18px "DejaVu Sans", Verdana, sans-serif; }
.scrollbar { width: 16px; display: flex; flex-direction: column; background: #e9e7e3; }
.scrollbar button { width: 16px; height: 16px; flex: none; }
.thumb { height: 275px; flex: none; background: #d6d3ce; border: 1px solid; border-color: #fff #424142 #424142 #fff; box-shadow: inset -1px -1px #848284; }
.track { flex: 1; }

.tabs { height: 34px; display: flex; align-items: flex-end; padding-left: 10px; border-bottom: 1px solid #000; background: repeating-linear-gradient(#fff 0 4px, #f1f1fb 4px 8px); }
.tabs a { height: 23px; line-height: 22px; text-align: center; color: #0000e7; text-decoration: none; border: 1px solid #3d7fb8; border-top: 2px solid #144a8c; border-bottom: 0; border-radius: 5px 5px 0 0; background: linear-gradient(#8cc8f4 0 32%, #6bb4f0 45%, #9be0fa 75%, #c5fbff); }
.tabs .seen { color: #521a8c; }
.tabs .active { color: #000; border-color: #8a7448; border-top-color: #2c5a42; background: linear-gradient(#f3c792 0 32%, #efb377 45%, #f8d8ae 75%, #ffe9c8); height: 24px; margin-bottom: -1px; }
.t1 { width: 103px; } .t2 { width: 91px; } .t3 { width: 112px; } .t4 { width: 91px; } .t5 { width: 68px; } .t6 { width: 126px; }
.tabs a { padding-left: 3px; }
.tab-icons { margin-left: auto; display: flex; align-items: center; gap: 6px; padding-right: 12px; }
.opac text { font: 11px "DejaVu Sans Condensed", sans-serif; fill: #333; }
.tab-icons .opac { margin-right: -2px; }

.page-body { display: flex; }
.side { width: 162px; flex: none; padding: 7px 0 0 8px; }
.side h3 { font-size: 16px; font-weight: normal; line-height: 19px; padding-left: 3px; }
.side-links { position: relative; }
.watermark { position: absolute; left: 0; top: 0; width: 141px; height: 152px; }
.side ul { position: relative; list-style: none; font-size: 11px; }
.side li { height: 22px; line-height: 19px; display: flex; }
.side li:nth-child(3n+2) { height: 21px; }
.side li svg { width: 32px; height: 21px; margin-right: -13px; }
.side a { color: #000; position: relative; }
.content { flex: 1; min-width: 0; padding: 24px 2px 0 0; }
.content > h2 { color: #ef7110; font-size: 19px; line-height: 24px; padding-left: 1px; }
.content h3 { color: #3a3aa8; font-size: 16px; line-height: 20px; font-weight: normal; }
.search-form { margin: 11px 3px 0 2px; padding: 11px 5px 4px; background: #c6dfff; }
.search-form h3 { padding-bottom: 1px; border-bottom: 3px solid #5251ff; }
.field { height: 64px; padding: 13px 5px 0; border-bottom: 3px solid #5251ff; }
.field input { width: 405px; max-width: 100%; height: 23px; background: #fff; border: 2px solid; border-color: #6b696b #dedbd6 #dedbd6 #6b696b; }
.actions { display: flex; align-items: center; gap: 5px; padding-top: 26px; }
.actions button { height: 21px; padding: 0 9px; background: #de6500; color: #fff; font-size: 12px; font-weight: bold; border: 1px solid; border-color: #ffb267 #8a3c00 #8a3c00 #ffb267; }
.actions a { margin-left: auto; color: #222; }
.content .found { margin-top: 45px; padding-left: 1px; border-bottom: 2px solid #5251ff; }
table { width: 100%; border-collapse: collapse; border: 1px solid #5251ff; }
td { height: 23px; padding: 3px 2px 1px; border-bottom: 1px solid #5251ff; background: #fff; line-height: 18px; }
td:first-child { width: 480px; }
tr:nth-child(odd) td { background: #c6dfff; }

.ff-status { height: 25px; flex: none; display: flex; align-items: center; gap: 2px; padding: 1px 0 0; }
.cell { height: 24px; display: flex; align-items: center; border: 1px solid; border-color: #848284 #fff #fff #848284; }
.c-edit { width: 32px; justify-content: center; }
.c-text { flex: 1; padding-left: 6px; }
.c-note { width: 110px; padding-left: 4px; gap: 7px; white-space: nowrap; }
.c-ico { width: 30px; justify-content: center; }
.size-grip { width: 14px; height: 14px; margin-left: 2px; align-self: flex-end; }

/* Toolbox */
.toolbox { position: absolute; left: 3px; top: 126px; width: 63px; background: #d6d3ce; border: 2px solid; border-color: #efece7 #636163 #636163 #efece7; padding: 2px 0 4px; }
.tb-title { height: 13px; background: #848284; border-bottom: 1px solid #000; }
.tb-eye { width: 100%; height: 24px; border-bottom: 1px solid #848284; }
.tb-grid { display: grid; grid-template-columns: 26px 26px; padding: 2px 0 0 3px; }
.toolbox hr { grid-column: 1 / -1; margin: 1px 0; width: 52px; height: 2px; border: 0; background: #848284; border-bottom: 1px solid #fff; }
.toolbox > hr { margin: 1px 3px; }
.tb-grid button { height: 22px; padding: 2px 0 0 4px; text-align: left; position: relative; }
.tb-grid button svg { width: 18px; height: 18px; }
.tb-grid .more::after { content: ""; position: absolute; right: 1px; bottom: 0; border: 2px solid; border-color: transparent #000 #000 transparent; }
.tb-grid .picked, .tb-row .picked { background: #fff; box-shadow: inset 1px 1px #848284; }
.toolbox .type-tool { font: 21px/18px "Liberation Serif", serif; padding-left: 7px; }
.tb-row { display: flex; align-items: center; padding: 0 4px; }
.tb-row button { padding: 3px; }
.two { gap: 2px; height: 25px; }
.two svg { width: 18px; height: 16px; }
.three { height: 20px; }
.three button { padding: 2px; }
.three svg { width: 12px; height: 12px; }
.tb-jump { margin-left: 4px; }

/* Photoshop status line */
.ps-status { height: 19px; flex: none; display: flex; align-items: stretch; font: 10px/17px "Liberation Sans", Arial, sans-serif; border-bottom: 1px solid #fff; }
.ps-status input { width: 48px; border: 1px solid #000; text-align: center; padding: 0; background: #fff; }
.doc-icon { width: 25px; display: grid; place-items: center; border-right: 1px solid #fff; }
.doc { width: 203px; padding-left: 2px; border-right: 1px solid #fff; }
.ps-status button { width: 17px; display: grid; place-items: center; border-right: 1px solid #fff; }
.hint { flex: 1; padding-left: 2px; white-space: nowrap; }

/* Taskbar */
.taskbar { height: 27px; flex: none; display: flex; align-items: center; padding: 2px 3px 0 2px; }
.start, .tasks button { height: 22px; display: flex; align-items: center; border: 1px solid; border-color: #fff #424142 #424142 #fff; box-shadow: inset -1px -1px #848284; padding: 1px 3px 0; }
.start { width: 57px; font-weight: bold; gap: 1px; }
.grip2 { width: 3px; height: 19px; border: 1px solid; border-color: #fff #848284 #848284 #fff; margin: 0 6px 0 7px; flex: none; }
.quick { display: flex; gap: 7px; margin-left: 1px; }
.chev { margin: -8px 5px 0 16px; font-weight: bold; font-size: 13px; }
.chev + .grip2 { margin: 0 5px 0 0; }
.tasks { flex: 1; min-width: 0; display: flex; gap: 4px; max-width: 554px; margin-left: 1px; }
.tasks button { flex: 1; min-width: 0; gap: 1px; }
.tasks .pressed { background: #efeeeb; font-weight: bold; border-color: #424142 #fff #fff #424142; box-shadow: inset 1px 1px #848284; }
.tray { margin-left: auto; width: 256px; height: 23px; display: flex; align-items: center; gap: 2px; padding: 0 10px 0 3px; border: 1px solid; border-color: #848284 #fff #fff #848284; }
.lang { width: 16px; height: 16px; line-height: 16px; background: #000084; color: #fff; text-align: center; font-size: 10px; }
.tray time { margin-left: auto; }
```
FILE: rulers.js
```js
const NS = "http://www.w3.org/2000/svg";
const STEP = 5.67;

function add(parent, name, attrs, text) {
  const el = document.createElementNS(NS, name);
  for (const key in attrs) el.setAttribute(key, attrs[key]);
  if (text !== undefined) el.textContent = text;
  parent.appendChild(el);
}

/* "covered" is the stretch hidden by the toolbox, where labels are left out. */
function drawRuler(id, origin, vertical, covered) {
  const svg = document.getElementById(id);
  const box = svg.getBoundingClientRect();
  const length = vertical ? box.height : box.width;
  const first = -Math.floor(origin / STEP);
  for (let i = first; origin + i * STEP < length; i++) {
    const pos = Math.round(origin + i * STEP);
    const size = i % 10 === 0 ? 15 : i % 5 === 0 ? 6 : 3;
    const from = 15 - size;
    add(svg, "rect", vertical
      ? { x: from, y: pos, width: size, height: 1 }
      : { x: pos, y: from, width: 1, height: size });
    if (i % 10 !== 0 || (pos > covered[0] && pos < covered[1])) continue;
    const label = String(Math.abs(i / 5));
    if (vertical) {
      [...label].forEach((digit, n) => add(svg, "text", { x: 1, y: pos + 10 + n * 9 }, digit));
    } else {
      add(svg, "text", { x: pos + 1, y: 9 }, label);
    }
  }
}

const toolbox = document.querySelector(".toolbox");
drawRuler("ruler-h", 79, false, [0, 0]);
drawRuler("ruler-v", 12, true, [toolbox.offsetTop - 10, toolbox.offsetTop + toolbox.offsetHeight]);
```
